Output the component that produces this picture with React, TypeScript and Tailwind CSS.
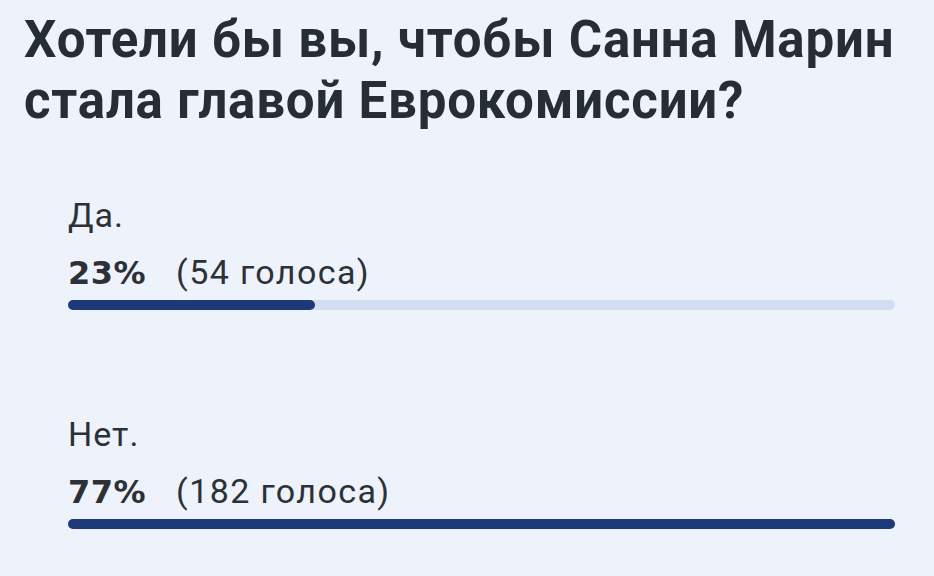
const results = [
  { label: 'Да.', percent: 23, votes: '54 голоса' },
  { label: 'Нет.', percent: 77, votes: '182 голоса' },
];

// bars are scaled against the leading answer, so it always fills the track
const top = Math.max(...results.map((r) => r.percent));

function PollOption({ label, percent, votes }: { label: string; percent: number; votes: string }) {
  return (
    <div className="flex flex-col">
      <div className="text-[34px] leading-[40px] tracking-[1px] text-[#2b3136]">{label}</div>
      <div className="mt-[17px] flex items-baseline gap-[30px] leading-[40px]">
        <span className="font-['DejaVu_Sans',sans-serif] text-[32px] font-bold tracking-[0.5px] text-[#2b3136]">
          {percent}%
        </span>
        <span className="text-[34px] tracking-[1.4px] text-[#2b3136]">({votes})</span>
      </div>
      <div className="mt-[7px] h-[10px] w-full rounded-full bg-[#d1ddf1]">
        <div className="h-full rounded-full bg-[#1c3a78]" style={{ width: `${(percent / top) * 100}%` }} />
      </div>
    </div>
  );
}

export default function App() {
  return (
    <div className="h-[576px] w-[934px] overflow-hidden bg-[#eef2fa] font-['Roboto',sans-serif]">
      <h1 className="pl-6 pt-[9px] text-[51px] font-bold leading-[61px] tracking-[0.8px] text-[#262d33]">
        Хотели бы вы, чтобы Санна Марин
        <br />
        стала главой Еврокомиссии?
      </h1>
      <div className="mt-[64px] flex flex-col gap-[104px] pl-[68px] pr-[39px]">
        {results.map((r) => (
          <PollOption key={r.label} {...r} />
        ))}
      </div>
    </div>
  );
}
